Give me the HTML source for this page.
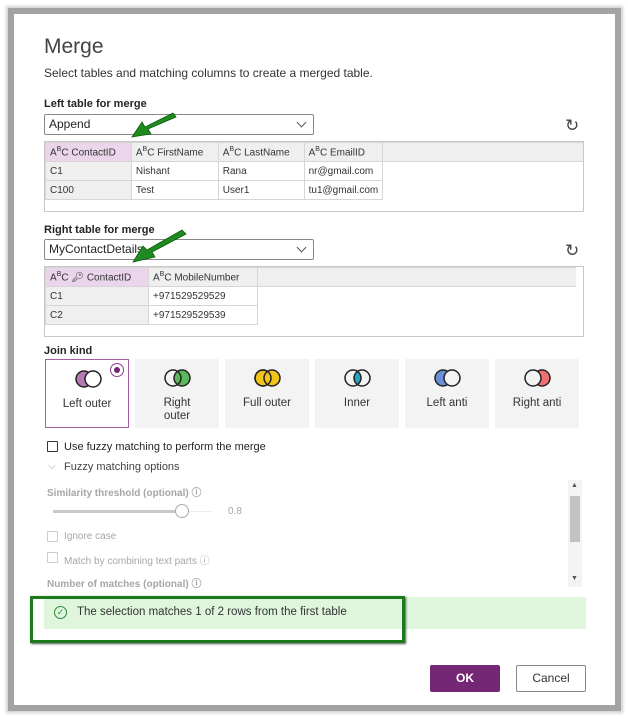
<!DOCTYPE html>
<html><head><style>
body{margin:0;width:628px;height:719px;background:#fff;position:relative;overflow:hidden;font-family:"Liberation Sans",sans-serif;color:#252423}
.dlg{position:absolute;left:14px;top:14px;width:601px;height:691px;background:#fff;border:6px solid #a3a3a3;margin:-6px;box-shadow:0 0 3px 2px #d0d0d0}
.a{position:absolute}
.lbl{font-size:11px;font-weight:bold}
.dd{border:1px solid #8a8886;border-radius:2px;width:267px;font-size:12px;line-height:19px;padding-left:4px;box-sizing:border-box;height:21px}
.dd:after{content:"";position:absolute;right:8px;top:4px;width:6px;height:6px;border-right:1px solid #555;border-bottom:1px solid #555;transform:rotate(45deg)}
table{border-collapse:collapse;font-size:10px}
td{border:1px solid #d6d6d6;height:18px;padding:0 4px;color:#333;white-space:nowrap}
.h td{background:#efefef}
.tb{border:1px solid #c8c8c8;background:#fff;width:538px;height:69px}
.tile{position:absolute;top:359px;width:84px;height:69px;background:#f3f3f3;font-size:11.5px;text-align:center;color:#333}
.tile svg{position:absolute;left:28px;top:9px}
.tile span{position:absolute;left:0;right:0;top:38px;line-height:13px}
.g{color:#a6a6a6;font-size:10px}
.cb{position:absolute;width:9px;height:9px;border:1px solid #ccc;border-radius:1px}
</style></head><body>
<div class="dlg"></div>
<div class="a" style="left:44px;top:35px;font-size:21px;font-weight:300;color:#444">Merge</div>
<div class="a" style="left:44px;top:66px;font-size:12px;color:#333">Select tables and matching columns to create a merged table.</div>

<div class="a lbl" style="left:44px;top:98px">Left table for merge</div>
<div class="a dd" style="left:44px;top:114px;width:270px">Append</div>
<div class="a" style="left:565px;top:116px;font-size:17px;color:#444">↻</div>
<div class="a tb" style="left:44px;top:141px">
<table><tr class="h"><td style="width:77px;background:#ead5ea">A<sup style="font-size:7px">B</sup>C ContactID</td><td style="width:78px">A<sup style="font-size:7px">B</sup>C FirstName</td><td style="width:77px">A<sup style="font-size:7px">B</sup>C LastName</td><td style="width:67px">A<sup style="font-size:7px">B</sup>C EmailID</td><td style="width:194px;border-right:none"></td></tr>
<tr><td style="background:#efefef">C1</td><td>Nishant</td><td>Rana</td><td>nr@gmail.com</td></tr>
<tr><td style="background:#efefef">C100</td><td>Test</td><td>User1</td><td>tu1@gmail.com</td></tr></table></div>

<div class="a lbl" style="left:44px;top:224px">Right table for merge</div>
<div class="a dd" style="left:44px;top:239px;width:270px">MyContactDetails</div>
<div class="a" style="left:565px;top:241px;font-size:17px;color:#444">↻</div>
<div class="a tb" style="left:44px;top:266px">
<table><tr class="h"><td style="width:94px;background:#ead5ea">A<sup style="font-size:7px">B</sup>C &#x1F511;&#xFE0E; ContactID</td><td style="width:100px">A<sup style="font-size:7px">B</sup>C MobileNumber</td><td style="width:310px;border-right:none"></td></tr>
<tr><td style="background:#efefef">C1</td><td>+971529529529</td></tr>
<tr><td style="background:#efefef">C2</td><td>+971529529539</td></tr></table></div>

<div class="a lbl" style="left:44px;top:345px">Join kind</div>
<div class="tile" style="left:45px;background:#fff;border:1px solid #a55ea5;width:82px;height:67px"><svg width="30" height="20"><circle cx="10" cy="10" r="8" fill="#b57ab5" stroke="#222" stroke-width="1.5"/><circle cx="19" cy="10" r="8" fill="#fff" stroke="#222" stroke-width="1.5"/></svg><span>Left outer</span><div class="a" style="left:64px;top:3px;width:12px;height:12px;border:1px solid #8e3c8e;border-radius:50%"><div class="a" style="left:3px;top:3px;width:6px;height:6px;border-radius:50%;background:#742774"></div></div></div>
<div class="tile" style="left:135px"><svg width="30" height="20"><circle cx="19" cy="10" r="8" fill="#5cb85c" stroke="#222" stroke-width="1.5"/><circle cx="10" cy="10" r="8" fill="none" stroke="#222" stroke-width="1.5"/></svg><span>Right<br>outer</span></div>
<div class="tile" style="left:225px"><svg width="30" height="20"><circle cx="10" cy="10" r="8" fill="#f0c419" stroke="#222" stroke-width="1.5"/><circle cx="19" cy="10" r="8" fill="#f0c419" stroke="#222" stroke-width="1.5"/><circle cx="10" cy="10" r="8" fill="none" stroke="#222" stroke-width="1.5"/></svg><span>Full outer</span></div>
<div class="tile" style="left:315px"><svg width="30" height="20"><path d="M14.5 3.5A8 8 0 0 1 14.5 16.5A8 8 0 0 1 14.5 3.5Z" fill="#1fa8c0"/><circle cx="10" cy="10" r="8" fill="none" stroke="#222" stroke-width="1.5"/><circle cx="19" cy="10" r="8" fill="none" stroke="#222" stroke-width="1.5"/></svg><span>Inner</span></div>
<div class="tile" style="left:405px"><svg width="30" height="20"><circle cx="10" cy="10" r="8" fill="#6b8fd6" stroke="#222" stroke-width="1.5"/><circle cx="19" cy="10" r="8" fill="#f3f3f3" stroke="#222" stroke-width="1.5"/></svg><span>Left anti</span></div>
<div class="tile" style="left:495px"><svg width="30" height="20"><circle cx="19" cy="10" r="8" fill="#ef7070" stroke="#222" stroke-width="1.5"/><circle cx="10" cy="10" r="8" fill="#f3f3f3" stroke="#222" stroke-width="1.5"/></svg><span>Right anti</span></div>

<div class="cb" style="left:47px;top:441px;border-color:#333"></div>
<div class="a" style="left:64px;top:441px;font-size:11px">Use fuzzy matching to perform the merge</div>
<div class="a" style="left:48px;top:461px;font-size:10px;color:#999">⌵</div>
<div class="a" style="left:64px;top:461px;font-size:11px;color:#444">Fuzzy matching options</div>
<div class="a g" style="left:47px;top:484px;font-weight:bold">Similarity threshold (optional) ⓘ</div>
<div class="a" style="left:53px;top:510px;width:130px;height:3px;background:#c8c8c8"></div>
<div class="a" style="left:183px;top:511px;width:30px;height:1px;background:#eee"></div>
<div class="a" style="left:175px;top:504px;width:12px;height:12px;border:1px solid #aaa;border-radius:50%;background:#fff"></div>
<div class="a g" style="left:228px;top:506px">0.8</div>
<div class="cb" style="left:47px;top:531px"></div><div class="a g" style="left:64px;top:531px">Ignore case</div>
<div class="cb" style="left:47px;top:552px"></div><div class="a g" style="left:64px;top:552px">Match by combining text parts ⓘ</div>
<div class="a g" style="left:47px;top:575px;font-weight:bold">Number of matches (optional) ⓘ</div>
<div class="a" style="left:568px;top:480px;width:14px;height:107px;background:#f3f3f3"></div>
<div class="a" style="left:570px;top:496px;width:10px;height:46px;background:#c2c2c2"></div>
<div class="a" style="left:571px;top:482px;font-size:7px;color:#555">▲</div>
<div class="a" style="left:571px;top:575px;font-size:7px;color:#555">▼</div>

<div class="a" style="left:44px;top:597px;width:542px;height:32px;background:#dff6dd"></div>
<div class="a" style="left:30px;top:596px;width:369px;height:41px;border:3px solid #1b7a1b;box-shadow:1px 1px 2px #555"></div>
<div class="a" style="left:54px;top:606px;width:11px;height:11px;border:1px solid #2b8a3e;border-radius:50%;font-size:9px;line-height:11px;text-align:center;color:#2b8a3e">✓</div>
<div class="a" style="left:77px;top:606px;font-size:11.5px;color:#333">The selection matches 1 of 2 rows from the first table</div>

<div class="a" style="left:430px;top:665px;width:70px;height:27px;background:#742774;border-radius:2px;color:#fff;font-size:12px;font-weight:bold;text-align:center;line-height:27px">OK</div>
<div class="a" style="left:516px;top:665px;width:68px;height:25px;border:1px solid #8a8886;border-radius:2px;font-size:12px;text-align:center;line-height:25px;color:#333">Cancel</div>

<svg class="a" style="left:0;top:0" width="628" height="719">
<g fill="#1f8a1f" stroke="#0d5c0d" stroke-width="0.8">
<path d="M176 117 L148 129 L151 134 L132 137 L142 122 L145 127 L173 113 Z"/>
<path d="M186 234 L152 252 L155 257 L133 262 L143 246 L147 250 L182 230 Z"/>
</g></svg>
</body></html>
